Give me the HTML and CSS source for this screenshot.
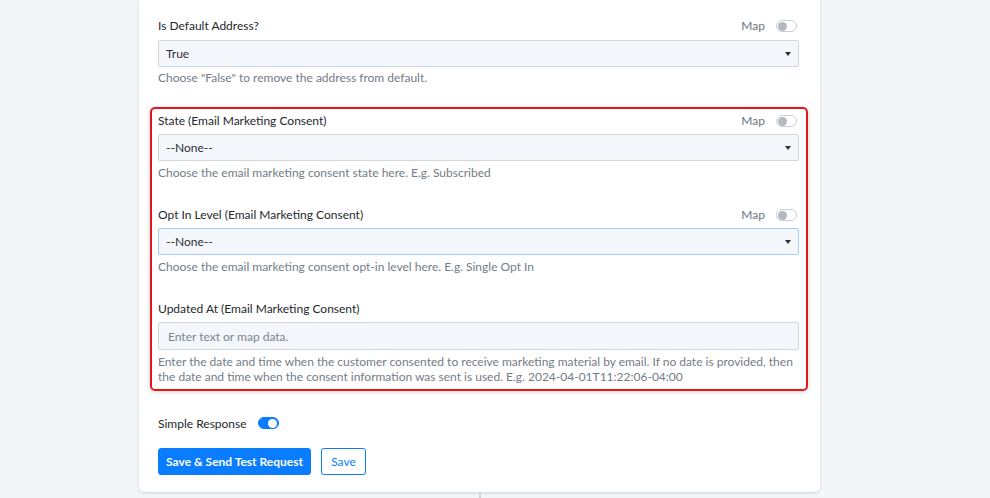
FILE: index.html
```html
<!DOCTYPE html>
<html>
<head>
<meta charset="utf-8">
<link rel="stylesheet" href="styles.css">
</head>
<body>
<div class="page">
  <div class="card">
    <div class="field first">
      <div class="label-row">
        <span class="label">Is Default Address?</span>
        <span class="map">Map <span class="toggle"><span class="knob"></span></span></span>
      </div>
      <div class="select"><span>True</span><span class="caret"></span></div>
      <div class="help">Choose "False" to remove the address from default.</div>
    </div>

    <div class="highlight">
      <div class="field">
        <div class="label-row">
          <span class="label">State (Email Marketing Consent)</span>
          <span class="map">Map <span class="toggle"><span class="knob"></span></span></span>
        </div>
        <div class="select"><span>--None--</span><span class="caret"></span></div>
        <div class="help">Choose the email marketing consent state here. E.g. Subscribed</div>
      </div>
      <div class="field">
        <div class="label-row">
          <span class="label">Opt In Level (Email Marketing Consent)</span>
          <span class="map">Map <span class="toggle"><span class="knob"></span></span></span>
        </div>
        <div class="select focused"><span>--None--</span><span class="caret"></span></div>
        <div class="help">Choose the email marketing consent opt-in level here. E.g. Single Opt In</div>
      </div>
      <div class="field last">
        <div class="label-row">
          <span class="label">Updated At (Email Marketing Consent)</span>
        </div>
        <div class="input">Enter text or map data.</div>
        <div class="help multi">Enter the date and time when the customer consented to receive marketing material by email. If no date is provided, then the date and time when the consent information was sent is used. E.g. 2024-04-01T11:22:06-04:00</div>
      </div>
    </div>

    <div class="simple">
      <span class="label">Simple Response</span>
      <span class="toggle on"><span class="knob"></span></span>
    </div>
    <div class="buttons">
      <button class="btn primary">Save &amp; Send Test Request</button>
      <button class="btn outline">Save</button>
    </div>
  </div>
  <div class="connector"></div>
</div>
</body>
</html>
```

FILE: styles.css
```css
* { box-sizing: border-box; }
html, body {
  margin: 0;
  padding: 0;
  background: #f3f5f9;
  font-family: Lato, "Noto Sans", "Liberation Sans", sans-serif;
  font-size: 12px;
  color: #2f3338;
  height: 498px;
  overflow: hidden;
}
.page {
  padding-left: 139px;
}
.card {
  width: 681px;
  background: #fff;
  border-radius: 0 0 5px 5px;
  box-shadow: 0 1px 3px rgba(40, 50, 70, 0.18);
  padding: 18px 21px 17px 19px;
}
.label-row {
  display: flex;
  justify-content: space-between;
  align-items: center;
  height: 16px;
  line-height: 16px;
}
.label {
  color: #24282e;
  font-size: 12px;
}
.map {
  display: flex;
  align-items: center;
  gap: 11px;
  color: #6c7682;
  font-size: 12px;
  padding-left: 2px;
}
.toggle {
  display: inline-flex;
  align-items: center;
  flex: none;
  width: 21px;
  height: 12px;
  border: 1px solid #c9ced5;
  border-radius: 6px;
  background: #fff;
  padding: 0 1px;
  margin-right: 2px;
}
.toggle .knob {
  width: 9px;
  height: 9px;
  border-radius: 50%;
  background: #b4b9c1;
}
.toggle.on {
  background: #0a7cff;
  border-color: #0a7cff;
  justify-content: flex-end;
}
.toggle.on .knob {
  background: #fff;
}
.select, .input {
  margin-top: 6px;
  height: 27px;
  border: 1px solid #d3d8df;
  border-radius: 2px;
  background: #f3f6fa;
  display: flex;
  align-items: center;
  justify-content: space-between;
  padding: 0 7px 0 7px;
  color: #2b2f36;
}
.select.focused {
  border-color: #a7cdf6;
}
.input {
  height: 28px;
  padding-left: 9px;
  color: #7d8590;
}
.caret {
  width: 0;
  height: 0;
  border-left: 3.5px solid transparent;
  border-right: 3.5px solid transparent;
  border-top: 4px solid #2b2f36;
}
.help {
  margin-top: 4px;
  line-height: 16px;
  color: #737c87;
}
.help.multi {
  line-height: 15px;
}
.field.first .help { margin-top: 3px; }
.highlight {
  margin: 21px -9px 0 -8px;
  border: 2px solid #e8141b;
  border-radius: 5px;
  box-shadow: 0 1px 5px rgba(0, 0, 0, 0.18);
  padding: 4px 7px 5px 6px;
}
.highlight .field + .field {
  margin-top: 26px;
}
.highlight .select, .highlight .input { margin-top: 5px; }
.simple {
  margin-top: 24px;
  display: flex;
  align-items: center;
  gap: 11px;
  height: 16px;
}
.buttons {
  margin-top: 17px;
  display: flex;
  gap: 10px;
}
.btn {
  font-family: Lato, "Noto Sans", "Liberation Sans", sans-serif;
  font-size: 12px;
  height: 27px;
  border-radius: 3px;
  padding: 0;
  white-space: nowrap;
  cursor: pointer;
}
.btn.primary {
  background: #0a7cff;
  border: 1px solid #0a7cff;
  color: #fff;
  font-weight: 700;
  width: 153px;
}
.btn.outline {
  background: #fff;
  border: 1px solid #0a7cff;
  color: #0a7cff;
  width: 45px;
}
.connector {
  margin-left: 340px;
  width: 2px;
  height: 20px;
  background: #cfd3da;
}
```
